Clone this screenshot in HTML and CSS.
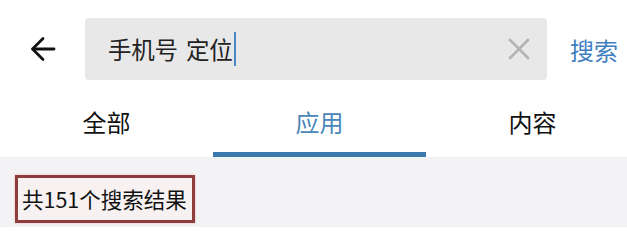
FILE: index.html
```html
<!DOCTYPE html>
<html lang="zh-CN">
<head>
<meta charset="utf-8">
<title>搜索</title>
<link rel="stylesheet" href="styles.css">
</head>
<body>
<div class="page">
  <header class="header">
    <div class="back">
      <svg width="26" height="26" viewBox="0 0 26 26" fill="none" stroke="#111" stroke-width="2.8" stroke-linecap="round" stroke-linejoin="round">
        <path d="M24 13H3"/>
        <path d="M13 2.5L2.5 13L13 23.5"/>
      </svg>
    </div>
    <div class="search-box">
      <span class="query">手机号 定位</span><span class="cursor"></span>
      <span class="clear">
        <svg width="22" height="22" viewBox="0 0 22 22" stroke="#b3b3b3" stroke-width="2.6" stroke-linecap="round">
          <path d="M2 2L20 20"/>
          <path d="M20 2L2 20"/>
        </svg>
      </span>
    </div>
    <div class="search-btn">搜索</div>
  </header>
  <nav class="tabs">
    <div class="tab">全部</div>
    <div class="tab active">应用</div>
    <div class="tab">内容</div>
  </nav>
  <section class="results">
    <div class="count">共151个搜索结果</div>
  </section>
</div>
</body>
</html>
```

FILE: styles.css
```css
html, body {
  margin: 0;
  padding: 0;
  background: #ffffff;
}

body {
  font-family: "Noto Sans CJK SC", "Noto Sans", sans-serif;
  color: #1a1a1a;
  width: 627px;
  height: 245px;
  overflow: hidden;
}

.header {
  display: flex;
  align-items: center;
  padding-top: 18px;
  height: 62px;
}

.back {
  width: 85px;
  height: 62px;
  display: flex;
  align-items: center;
  justify-content: center;
  padding-left: 1px;
  box-sizing: border-box;
}

.back svg {
  display: block;
}

.search-box {
  width: 462px;
  height: 62px;
  background: #e8e8e8;
  border-radius: 4px;
  display: flex;
  align-items: center;
  padding-left: 23px;
  box-sizing: border-box;
}

.query {
  font-size: 23.5px;
  line-height: 30px;
  color: #222;
  word-spacing: 3px;
  letter-spacing: -0.2px;
}

.cursor {
  width: 2px;
  height: 34px;
  background: #4f86c6;
  margin-left: 1px;
}

.clear {
  margin-left: auto;
  margin-right: 17px;
  display: flex;
}

.clear svg {
  display: block;
}

.search-btn {
  margin-left: 23px;
  font-size: 24px;
  line-height: 30px;
  color: #3f7fbf;
  margin-top: 2px;
}

.tabs {
  display: flex;
  margin-top: 20px;
}

.tab {
  width: 213px;
  flex: none;
  height: 57px;
  box-sizing: border-box;
  text-align: center;
  font-size: 24px;
  line-height: 44px;
  padding-bottom: 8px;
  border-bottom: 5px solid transparent;
  color: #111;
}

.tab.active {
  color: #4a86b9;
  border-bottom-color: #3a78ad;
}

.results {
  background: #f3f3f5;
  padding: 18px 0 4px 15px;
}

.count {
  display: inline-block;
  height: 48px;
  box-sizing: border-box;
  border: 3px solid #8f3c3c;
  background: #f7f1f2;
  padding: 0 5px 0 4px;
  font-size: 21.5px;
  line-height: 42px;
  color: #111;
  box-shadow: 0 0 2px #e9b5b5;
}
```
